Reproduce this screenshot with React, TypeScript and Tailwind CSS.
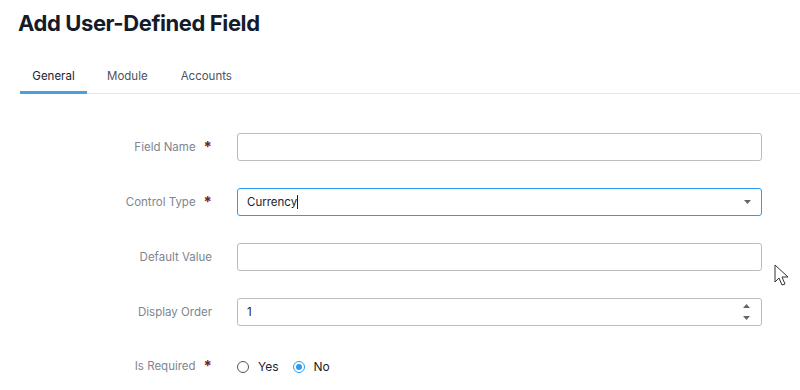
import React from 'react';

const Required: React.FC = () => (
  <span className="ml-[8px] text-[15px] leading-none text-[#7a1c22] font-bold relative top-[-1px]">*</span>
);

interface RowProps {
  label: string;
  required?: boolean;
  children: React.ReactNode;
}

const Row: React.FC<RowProps> = ({ label, required, children }) => (
  <div className="flex items-center">
    <div className="w-[212px] flex justify-end items-center text-[11.5px] text-[#80858f]">
      <span>{label}</span>
      {required && <Required />}
    </div>
    <div className="ml-[25px] w-[525px]">{children}</div>
  </div>
);

const Caret: React.FC<{ up?: boolean }> = ({ up }) => (
  <svg width="7" height="4" viewBox="0 0 7 4" className="block">
    {up ? <polygon points="0,4 7,4 3.5,0" fill="#666" /> : <polygon points="0,0 7,0 3.5,4" fill="#666" />}
  </svg>
);

const App: React.FC = () => {
  return (
    <div className="relative w-[800px] h-[390px] overflow-hidden bg-white font-['Inter',sans-serif] text-[#1c2330]">
      <h1 className="pl-[18px] pt-[8px] text-[22px] font-bold tracking-[-0.4px] leading-[30px] text-[#141c2b]">
        Add User-Defined Field
      </h1>

      <div className="mt-[30px] ml-[20px] flex border-b border-[#e6e8ec] text-[11.5px]">
        <div className="w-[67px] pb-[6px] text-center text-[#1c2330] border-b-[3px] border-[#4a9fdc] mb-[-1px]">General</div>
        <div className="ml-[20px] pb-[8px] text-[#4b5260]">Module</div>
        <div className="ml-[33px] pb-[8px] text-[#4b5260]">Accounts</div>
      </div>

      <div className="mt-[39px] flex flex-col gap-[27px]">
        <Row label="Field Name" required>
          <div className="h-[28px] rounded-[3px] border border-[#b9bcc1]" />
        </Row>
        <Row label="Control Type" required>
          <div className="h-[28px] rounded-[3px] border-[1.5px] border-[#2d9cf0] flex items-center pl-[9px] pr-[10px] text-[11.5px] text-[#1c2330]">
            <span>Currency</span>
            <span className="w-[1px] h-[14px] bg-[#1c2330]" />
            <span className="ml-auto"><Caret /></span>
          </div>
        </Row>
        <Row label="Default Value">
          <div className="h-[28px] rounded-[3px] border border-[#b9bcc1]" />
        </Row>
        <Row label="Display Order">
          <div className="h-[28px] rounded-[3px] border border-[#b9bcc1] flex items-center pl-[9px] pr-[11px] text-[11.5px] text-[#1c2330]">
            <span>1</span>
            <span className="ml-auto flex flex-col gap-[8px]">
              <Caret up />
              <Caret />
            </span>
          </div>
        </Row>
        <div className="mt-[5px]">
          <Row label="Is Required" required>
            <div className="flex items-center text-[12px] text-[#1c2330] h-[14px]">
              <span className="w-[12px] h-[12px] rounded-full border-[1.5px] border-[#555]" />
              <span className="ml-[9px]">Yes</span>
              <span className="ml-[14px] w-[12px] h-[12px] rounded-full border-[1.5px] border-[#2d9cf0] flex items-center justify-center">
                <span className="w-[6px] h-[6px] rounded-full bg-[#2d9cf0]" />
              </span>
              <span className="ml-[9px]">No</span>
            </div>
          </Row>
        </div>
      </div>

      <svg className="absolute left-[774px] top-[264px]" width="16" height="24" viewBox="0 0 16 24">
        <path d="M1 1 L1 18 L5 14 L8 21 L11 20 L8 13 L14 13 Z" fill="#fff" stroke="#333" strokeWidth="1" strokeLinejoin="round" />
      </svg>
    </div>
  );
};

export default App;
